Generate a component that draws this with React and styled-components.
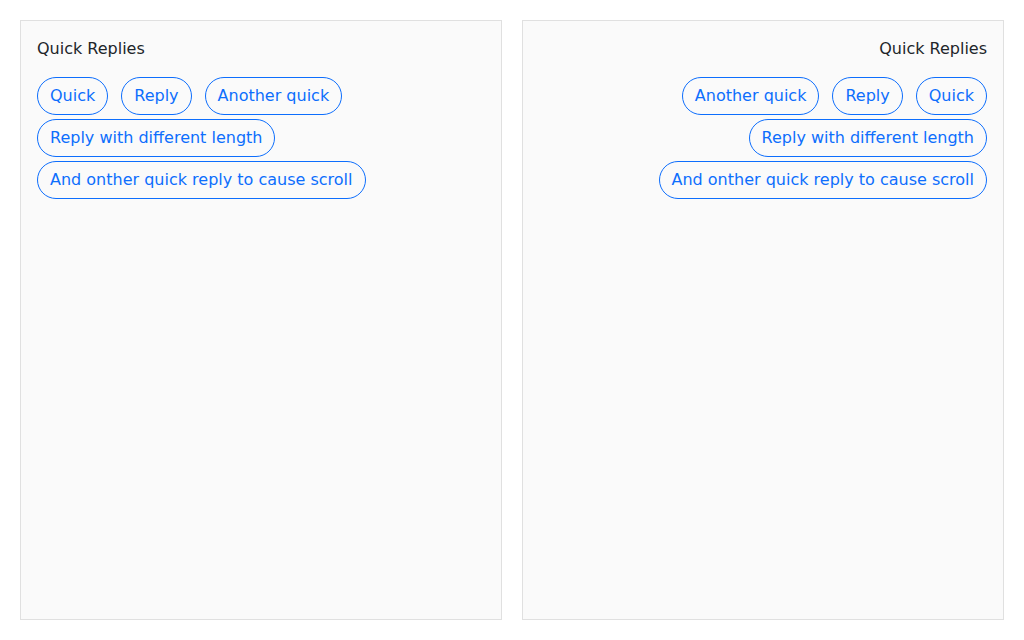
import React from "react";
import styled, { createGlobalStyle } from "styled-components";

const GlobalStyle = createGlobalStyle`
  *, *::before, *::after { box-sizing: border-box; }
  body {
    margin: 0;
    background: #fff;
    color: #212529;
    font-family: "DejaVu Sans", sans-serif;
    font-size: 16px;
    line-height: 24px;
  }
`;

const Page = styled.main`
  display: grid;
  grid-template-columns: 1fr 1fr;
  gap: 20px;
  min-height: 100vh;
  padding: 20px;
`;

const Panel = styled.section`
  padding: 16px;
  background: #fafafa;
  border: 1px solid #e0e0e0;
`;

const Title = styled.h2`
  margin: 0 0 16px;
  font-size: 16px;
  font-weight: 400;
  line-height: 24px;
`;

const Replies = styled.div`
  display: flex;
  flex-wrap: wrap;
  gap: 4px 13px;
`;

const Reply = styled.button`
  height: 38px;
  padding: 0 12px;
  border: 1px solid #0d6efd;
  border-radius: 20px;
  background: transparent;
  color: #0d6efd;
  font: inherit;
  white-space: nowrap;
  cursor: pointer;
`;

const replies = [
  "Quick",
  "Reply",
  "Another quick",
  "Reply with different length",
  "And onther quick reply to cause scroll",
];

function QuickReplies({ dir }) {
  return (
    <Panel dir={dir}>
      <Title>Quick Replies</Title>
      <Replies>
        {replies.map((text) => (
          <Reply key={text} type="button">{text}</Reply>
        ))}
      </Replies>
    </Panel>
  );
}

export default function App() {
  return (
    <>
      <GlobalStyle />
      <Page>
        <QuickReplies dir="ltr" />
        <QuickReplies dir="rtl" />
      </Page>
    </>
  );
}
